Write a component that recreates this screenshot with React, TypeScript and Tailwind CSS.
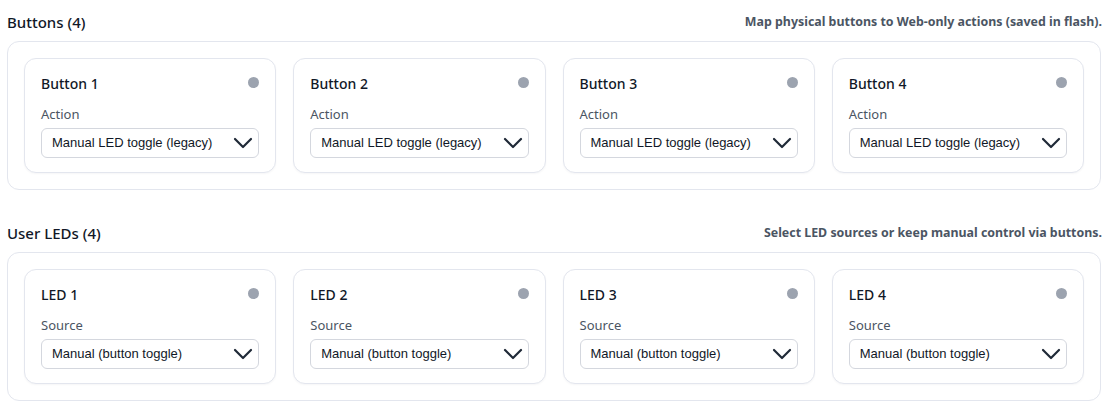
import React from 'react';

type Slot = { title: string; label: string; value: string };

const ChevronDown: React.FC = () => (
  <svg width="20" height="20" viewBox="0 0 20 20" fill="none" className="text-[#1f2937]">
    <path d="M2 6l8 8 8-8" stroke="currentColor" strokeWidth="2.2" strokeLinecap="round" strokeLinejoin="round" />
  </svg>
);

const SlotCard: React.FC<{ slot: Slot }> = ({ slot }) => (
  <div className="rounded-xl border border-[#e3e6ee] bg-white px-4 pt-[15px] pb-[14px] shadow-[0_1px_2px_rgba(16,24,40,0.04)]">
    <div className="flex items-center justify-between h-[18px]">
      <span className="text-[14px] font-medium text-[#111827]">{slot.title}</span>
      <span className="-mt-[2px] h-[11px] w-[11px] rounded-full bg-[#9ca3af]" />
    </div>
    <div className="mt-[13px] text-[13px] leading-[18px] text-[#4b5563]">{slot.label}</div>
    <div className="mt-[5px] flex h-[30px] items-center justify-between rounded-md border border-[#d4d7de] bg-white pl-[10px] pr-[5px]">
      <span className="font-['Liberation_Sans',Arial,sans-serif] text-[13px] text-[#111827]">{slot.value}</span>
      <ChevronDown />
    </div>
  </div>
);

const Section: React.FC<{ title: string; hint: string; slots: Slot[] }> = ({ title, hint, slots }) => (
  <section>
    <div className="flex items-center justify-between h-5 mb-[9px]">
      <h2 className="pl-[7px] text-[15px] font-medium text-[#111827]">{title}</h2>
      <p className="pr-[10px] text-[12.4px] font-bold text-[#4b5563]">{hint}</p>
    </div>
    <div className="ml-[7px] mr-[11px] rounded-xl border border-[#e3e6ee] bg-white p-4">
      <div className="grid grid-cols-4 gap-[17px]">
        {slots.map((s) => (
          <SlotCard key={s.title} slot={s} />
        ))}
      </div>
    </div>
  </section>
);

const buttons: Slot[] = [1, 2, 3, 4].map((n) => ({ title: `Button ${n}`, label: 'Action', value: 'Manual LED toggle (legacy)' }));
const leds: Slot[] = [1, 2, 3, 4].map((n) => ({ title: `LED ${n}`, label: 'Source', value: 'Manual (button toggle)' }));

export default function App() {
  return (
    <div className="min-h-screen bg-white pt-3 font-['Noto_Sans',sans-serif]">
      <Section title="Buttons (4)" hint="Map physical buttons to Web-only actions (saved in flash)." slots={buttons} />
      <div className="h-[33px]" />
      <Section title="User LEDs (4)" hint="Select LED sources or keep manual control via buttons." slots={leds} />
    </div>
  );
}
